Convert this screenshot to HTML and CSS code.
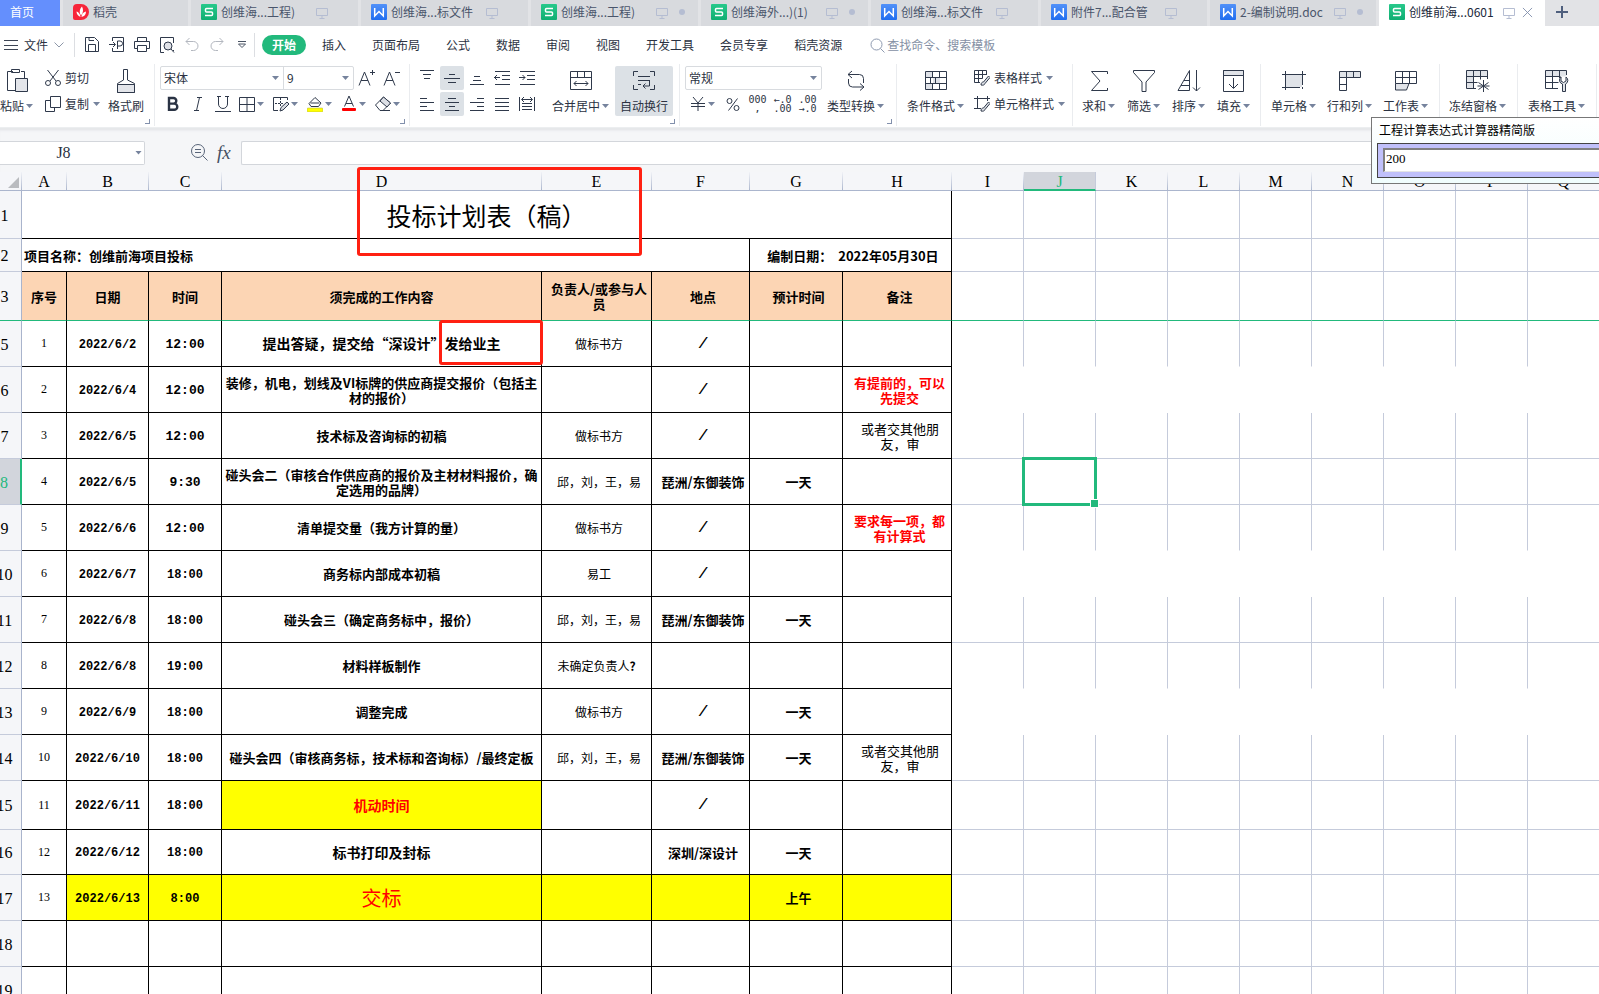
FILE: index.html
```html
<!DOCTYPE html>
<html lang="zh-CN">
<head>
<meta charset="utf-8">
<title>创维前海项目投标计划表</title>
<link rel="stylesheet" href="styles.css">
</head>
<body>
<svg class="symbols" aria-hidden="true">
  <defs>
    <linearGradient id="gGreen" x1="0" y1="0" x2="0" y2="1"><stop offset="0" stop-color="#27c98b"/><stop offset="1" stop-color="#0fae72"/></linearGradient>
    <linearGradient id="gBlue" x1="0" y1="0" x2="0" y2="1"><stop offset="0" stop-color="#5291f8"/><stop offset="1" stop-color="#1f6df0"/></linearGradient>
  </defs>
  <symbol id="sheet" viewBox="0 0 16 16"><rect width="16" height="16" rx="1" fill="url(#gGreen)"/><path d="M12 4.500H5.500a1 1 0 0 0-1 1V7a1 1 0 0 0 1 1h5a1 1 0 0 1 1 1v1.500a1 1 0 0 1-1 1H4" fill="none" stroke="#fff" stroke-width="1.500"/></symbol>
  <symbol id="word" viewBox="0 0 16 16"><rect width="16" height="16" rx="1" fill="url(#gBlue)"/><path d="M3.700 4v8L8 7.500l4.300 4.500V4" fill="none" stroke="#fff" stroke-width="1.500"/></symbol>
  <symbol id="monitor" viewBox="0 0 12 12"><path d="M.5 1.500h11v7H.5zM6 8.500v3M3.500 11.500h5" fill="none" stroke="#b5bdd2"/></symbol>
</svg>

<header>
  <nav class="tabs" aria-label="文档标签">
    <button class="tab home">首页</button>
    <button class="tab docer"><svg class="i16" viewBox="0 0 16 16"><path d="M4 0h4a8 8 0 0 1 0 16H2a2 2 0 0 1-2-2V4a4 4 0 0 1 4-4z" fill="#f7253a"/><path d="M7.500 13C5 12 3.500 10 3.500 7.500 5.500 8 7 9.500 7.500 13zM8 11.500C6 8.500 6.500 5 9 2.500c1.500 3 1.500 6-1 9zM8.500 13c.2-3 1.700-5 4.500-5.500 0 3-1.500 5-4.500 5.500z" fill="#fff"/></svg>稻壳</button>
    <button class="tab"><svg class="i16"><use href="#sheet"/></svg><span>创维海...工程)</span><svg class="mon"><use href="#monitor"/></svg></button>
    <button class="tab"><svg class="i16"><use href="#word"/></svg><span>创维海...标文件</span><svg class="mon"><use href="#monitor"/></svg></button>
    <button class="tab"><svg class="i16"><use href="#sheet"/></svg><span>创维海...工程)</span><svg class="mon"><use href="#monitor"/></svg><i class="dot"></i></button>
    <button class="tab"><svg class="i16"><use href="#sheet"/></svg><span>创维海外...)(1)</span><svg class="mon"><use href="#monitor"/></svg><i class="dot"></i></button>
    <button class="tab"><svg class="i16"><use href="#word"/></svg><span>创维海...标文件</span><svg class="mon"><use href="#monitor"/></svg></button>
    <button class="tab narrow"><svg class="i16"><use href="#word"/></svg><span>附件7...配合管</span><svg class="mon"><use href="#monitor"/></svg></button>
    <button class="tab narrow"><svg class="i16"><use href="#word"/></svg><span>2-编制说明.doc</span><svg class="mon"><use href="#monitor"/></svg><i class="dot"></i></button>
    <button class="tab narrow active"><svg class="i16"><use href="#sheet"/></svg><span>创维前海...0601</span><svg class="mon"><use href="#monitor"/></svg><svg class="close" viewBox="0 0 12 12"><path d="M1 1l10 10M11 1L1 11" stroke="#8390ad" fill="none"/></svg></button>
    <button class="newtab" aria-label="新建"><svg width="12" height="12" viewBox="0 0 12 12"><path d="M6 0v12M0 6h12" stroke="#4f5f7d" stroke-width="2"/></svg></button>
  </nav>

  <div class="menu">
    <button class="file"><svg width="14" height="12" viewBox="0 0 14 12"><path d="M0 1.500h14M0 6.500h14M0 10.500h14" stroke="#3c4454"/></svg>文件<svg class="chev" width="10" height="6" viewBox="0 0 10 6"><path d="M.5.5L5 5 9.500.5" fill="none" stroke="#8d97a8"/></svg></button>
    <i class="bar"></i>
    <button class="q" aria-label="保存"><svg class="i16" viewBox="0 0 16 16"><path d="M1.500.500h9l4 4v10h-13zM4.500 14V7.500h7V14M5 .500v3h5" class="ln"/></svg></button>
    <button class="q" aria-label="输出"><svg class="i16" viewBox="0 0 16 16"><path d="M3.500 4V.500h11v14h-11V11M0 7.500h6M4 5l2.500 2.500L4 10M8.500 12V4H11a2 2 0 0 1 0 5H8" class="ln"/></svg></button>
    <button class="q" aria-label="打印"><svg class="i16" viewBox="0 0 16 16"><path d="M3.500 4V.500h9V4M3.500 11.500h-3v-7h15v7h-3M3.500 8.500h9v6h-9z" class="ln"/></svg></button>
    <button class="q" aria-label="打印预览"><svg class="i16" viewBox="0 0 16 16"><path d="M5 15.500H1.500V.500h13V6M14.500 13v1" class="ln"/><circle cx="9" cy="9" r="4" fill="#e0e2e8" stroke="#2f394b"/><path d="M12 12l3 3.500" class="ln"/></svg></button>
    <button class="q" aria-label="撤销"><svg class="i16" viewBox="0 0 16 16"><path d="M5.500 1L2 4.500 5.500 8M2 4.500h7.500a4.500 4.500 0 0 1 0 9H7" fill="none" stroke="#b3b7bf"/></svg></button>
    <button class="q" aria-label="恢复"><svg class="i16" viewBox="0 0 16 16"><path d="M10.500 1L14 4.500 10.500 8M14 4.500H6.500a4.500 4.500 0 0 0 0 9H9" fill="none" stroke="#b3b7bf"/></svg></button>
    <button class="q" aria-label="更多"><svg width="8" height="8" viewBox="0 0 8 8"><path d="M0 .500h8M.500 3h7L4 6.500z" fill="none" stroke="#4a5464"/></svg></button>
    <i class="bar"></i>
    <button class="pill">开始</button>
    <div class="mtabs">
      <button>插入</button><button>页面布局</button><button>公式</button><button>数据</button><button>审阅</button><button>视图</button><button>开发工具</button><button>会员专享</button><button>稻壳资源</button>
    </div>
    <label class="find"><svg width="15" height="15" viewBox="0 0 15 15"><circle cx="6.500" cy="6.500" r="5.500" fill="none" stroke="#8e9ab0"/><path d="M10.500 10.500l4 4" stroke="#8e9ab0"/></svg><input type="text" placeholder="查找命令、搜索模板"></label>
  </div>

  <div class="ribbon">
    <section class="g g1">
      <button class="big"><svg width="22" height="24" viewBox="0 0 22 24"><path d="M7 2.500H1.500v19H9M15 2.500h3.500V9" class="ln"/><path d="M5.500.500h8v3h-8z" class="ln"/><path d="M9.500 9.500h12v13h-12z" fill="#e3e5ea" stroke="#2f394b"/></svg><span>粘贴<i class="caret"></i></span></button>
      <div class="rows">
        <button class="sm"><svg class="i16" viewBox="0 0 16 16"><path d="M2.500 0l8.500 11M13.500 0L5 11" class="ln"/><circle cx="3" cy="13" r="2.500" class="ln"/><circle cx="13" cy="13" r="2.500" class="ln"/></svg>剪切</button>
        <button class="sm"><svg class="i16" viewBox="0 0 16 16"><path d="M5.500.500h10v11h-10zM5.500 4.500h-5v11h9v-4" class="ln"/></svg>复制<i class="caret"></i></button>
      </div>
      <button class="big"><svg width="20" height="24" viewBox="0 0 20 24"><path d="M7.500 11V.500h4V11l7 3.500v9h-17v-9z" fill="#fff" stroke="#2f394b"/><path d="M1.500 15.500h17v8h-17z" fill="#e3e5ea" stroke="#2f394b"/></svg><span>格式刷</span></button>
      <i class="launch"></i>
    </section>

    <section class="g g2">
      <div class="rows">
        <div class="r">
          <div class="combo"><div class="dd fontname"><select aria-label="字体"><option>宋体</option></select></div><div class="dd fontsize"><select aria-label="字号"><option>9</option></select></div></div>
          <button class="ic" aria-label="增大字号"><svg width="18" height="16" viewBox="0 0 18 16"><path d="M1 15.500L6.500 2 12 15.500M3 10.500h7M14.500 0v5M12 2.500h5" class="ln"/></svg></button>
          <button class="ic" aria-label="减小字号"><svg width="18" height="16" viewBox="0 0 18 16"><path d="M1 15.500L6.500 2 12 15.500M3 10.500h7M12 2.500h5" class="ln"/></svg></button>
        </div>
        <div class="r">
          <button class="ic" aria-label="加粗"><svg class="i16" viewBox="0 0 16 16"><path d="M4 2h4.500a2.800 2.800 0 0 1 0 5.600H4zM4 7.600h5.200a3 3 0 0 1 0 6.200H4z" fill="none" stroke="#2a3344" stroke-width="2.400"/></svg></button>
          <button class="ic" aria-label="倾斜"><svg class="i16" viewBox="0 0 16 16"><path d="M7 1.500h5M4 14.500h5M9.500 1.500l-3 13" class="ln"/></svg></button>
          <button class="ic" aria-label="下划线"><svg class="i16" viewBox="0 0 16 16"><path d="M2 .500h4M10 .500h4M3.500.500V8a4.500 4.500 0 0 0 9 0V.500M0 15.500h16" class="ln"/></svg></button>
          <button class="sp" aria-label="边框"><svg class="i16" viewBox="0 0 16 16"><path d="M.500 1.500h15v14H.500zM8 1.500v14M.500 8.500h15" class="ln"/></svg><i class="caret"></i></button>
          <button class="sp" aria-label="绘制边框"><svg class="i16" viewBox="0 0 16 16"><path d="M14.500 4V1.500H.500v13H5" class="ln"/><path d="M2 7.500h9M7.500 2v8" class="ln" stroke-dasharray="2 1"/><path d="M7 15l1-3.500L14 6l2 2-6 6z" fill="#d9dce3" stroke="#2f394b"/></svg><i class="caret"></i></button>
          <button class="sp" aria-label="填充颜色"><svg class="i16" viewBox="0 0 16 16"><path d="M2 7.500L8 1.500l6 5.500-2.500 3.500H4z" fill="#fff" stroke="#2f394b"/><path d="M3.500 7h9" class="ln"/><rect y="12" width="16" height="4" rx="1" fill="#ff0" stroke="#a8a850" stroke-width=".5"/></svg><i class="caret"></i></button>
          <button class="sp" aria-label="字体颜色"><svg class="i16" viewBox="0 0 16 16"><path d="M3.500 10.500L8 0l4.500 10.500M5 7.500h6" class="ln"/><rect x="1" y="12" width="14" height="3" rx="1" fill="#f00"/></svg><i class="caret"></i></button>
          <button class="sp" aria-label="清除"><svg class="i16" viewBox="0 0 16 16"><path d="M.500 9l8-8 7 6-7.500 7.500H5z" fill="#fff" stroke="#2f394b"/><path d="M5 5l7 6 3.500-4-7-6z" fill="#dcdfe5" stroke="#2f394b"/><path d="M8 14.500h7" class="ln"/></svg><i class="caret"></i></button>
        </div>
      </div>
      <i class="launch"></i>
    </section>

    <section class="g g3">
      <div class="rows">
        <div class="r al">
          <button class="ic" aria-label="顶端对齐"><svg class="i16" viewBox="0 0 16 16"><path d="M1 .500h14M4 4.500h8M5 8.500h6" class="ln"/></svg></button>
          <button class="ic on" aria-label="垂直居中"><svg class="i16" viewBox="0 0 16 16"><path d="M5 4.500h6M0 8.500h16M4 12.500h8" class="ln"/></svg></button>
          <button class="ic" aria-label="底端对齐"><svg class="i16" viewBox="0 0 16 16"><path d="M5 6.500h6M4 10.500h8M1 14.500h14" class="ln"/></svg></button>
          <button class="ic" aria-label="减少缩进"><svg class="i16" viewBox="0 0 16 16"><path d="M1 1.500h15M8 5.500h8M8 9.500h8M1 14.500h15M0 7.500h6M3 5L.500 7.500 3 10" class="ln"/></svg></button>
          <button class="ic" aria-label="增加缩进"><svg class="i16" viewBox="0 0 16 16"><path d="M1 1.500h15M8 5.500h8M8 9.500h8M1 14.500h15M0 7.500h6M3.500 5L6 7.500 3.500 10" class="ln"/></svg></button>
        </div>
        <div class="r al">
          <button class="ic" aria-label="左对齐"><svg class="i16" viewBox="0 0 16 16"><path d="M1 2.500h7M1 6.500h14M1 10.500h7M1 14.500h14" class="ln"/></svg></button>
          <button class="ic on" aria-label="水平居中"><svg class="i16" viewBox="0 0 16 16"><path d="M4 2.500h8M1 6.500h14M5 10.500h6M1 14.500h14" class="ln"/></svg></button>
          <button class="ic" aria-label="右对齐"><svg class="i16" viewBox="0 0 16 16"><path d="M8 2.500h7M1 6.500h14M8 10.500h7M1 14.500h14" class="ln"/></svg></button>
          <button class="ic" aria-label="两端对齐"><svg class="i16" viewBox="0 0 16 16"><path d="M1 2.500h14M1 6.500h14M1 10.500h14M1 14.500h14" class="ln"/></svg></button>
          <button class="ic" aria-label="分散对齐"><svg class="i16" viewBox="0 0 16 16"><path d="M.500 1v14M15.500 1v14M3 7.500h10M3 10.500h10M3 13.500h10M3 3.500h10M5 1L2.500 3.500 5 6M11 1l2.500 2.500L11 6" class="ln"/></svg></button>
        </div>
      </div>
      <button class="big merge"><svg width="22" height="20" viewBox="0 0 22 20"><path d="M.500.500h21v18H.500zM.500 6.500h21M7.500.500v6M14.500.500v6M4 12.500h14M6.500 10L4 12.500 6.500 15M15.500 10l2.500 2.500-2.500 2.500" class="ln"/></svg><span>合并居中<i class="caret"></i></span></button>
      <button class="big on wrap"><svg width="22" height="20" viewBox="0 0 22 20"><path d="M5 .500H.500V5M17 .500h4.500V5M5 18.500H.500V14M17 18.500h4.500V14M5 5.500h12M5 9.500h12M5 13.500h3M16.500 9.500v5.500H10M12.500 12.500L10 15l2.500 2.500" class="ln"/></svg><span>自动换行</span></button>
      <i class="launch"></i>
    </section>

    <section class="g g4">
      <div class="rows">
        <div class="combo"><div class="dd numfmt"><select aria-label="数字格式"><option>常规</option></select></div></div>
        <div class="r">
          <button class="sp cur" aria-label="货币"><svg class="i16" viewBox="0 0 16 16"><path d="M3 1l5 6 5-6M1 7.500h14M1 10.500h14M8 7v8" class="ln"/></svg><i class="caret"></i></button>
          <button class="ic" aria-label="百分比"><svg class="i16" viewBox="0 0 16 16"><circle cx="4.500" cy="5" r="2.500" class="ln"/><circle cx="11.500" cy="12" r="2.500" class="ln"/><path d="M12.500 2.500l-9 12" class="ln"/></svg></button>
          <button class="ic num" aria-label="千位分隔"><span>000</span><span>,</span></button>
          <button class="ic num" aria-label="增加小数位"><span>←.0</span><span>.00</span></button>
          <button class="ic num" aria-label="减少小数位"><span>.00</span><span>→.0</span></button>
        </div>
      </div>
      <button class="big conv"><svg width="20" height="22" viewBox="0 0 20 22"><path d="M6 1L2 4.500 6 8M2 4.500h11.500a4 4 0 0 1 4 4V13M14 13.500l4 3.500-4 3.500M18 17H6.500a4 4 0 0 1-4-4V9" class="ln"/></svg><span>类型转换<i class="caret"></i></span></button>
      <i class="launch"></i>
    </section>

    <section class="g g5">
      <button class="big"><svg width="22" height="20" viewBox="0 0 22 20"><path d="M.500.500h21v18H.500z" fill="#fff"/><path d="M1 1h7v5H1zM8 7h7v5H8zM1 13h7v5H1z" fill="#dfe2e8"/><path d="M.500.500h21v18H.500zM.500 6.500h21M.500 12.500h21M7.500.500v6M14.500.500v6M10.500 6.500v6M5.500 6.500v6M7.500 12.500v6M14.500 12.500v6" class="ln"/></svg><span>条件格式<i class="caret"></i></span></button>
      <div class="rows">
        <button class="sm"><svg class="i16" viewBox="0 0 16 16"><path d="M6 12.500H.500v-12h12V5M.500 4.500h12M.500 8.500h8M4.500.500v12M8.500.500v8" class="ln"/><path d="M7 15c0-2 1-3 2.500-3L14.500 6l1.500 1.500-5 6c-.5 1.500-2 2-4 1.500z" fill="#dcdfe5" stroke="#2f394b"/></svg>表格样式<i class="caret"></i></button>
        <button class="sm"><svg class="i16" viewBox="0 0 16 16"><path d="M3.500 0v13M0 2.500h16M0 12.500h7M13.500 0v5" class="ln"/><path d="M7 15c0-2 1-3 2.500-3L14.500 6l1.500 1.500-5 6c-.5 1.500-2 2-4 1.500z" fill="#dcdfe5" stroke="#2f394b"/></svg>单元格样式<i class="caret"></i></button>
      </div>
    </section>

    <section class="g g6">
      <button class="big"><svg width="18" height="22" viewBox="0 0 18 22"><path d="M17.500 4V1.500H1.500L10 11l-8.500 9.500h16V18" class="ln"/></svg><span>求和<i class="caret"></i></span></button>
      <button class="big"><svg width="22" height="22" viewBox="0 0 22 22"><path d="M.500.500h21v2L13 12v9.500H9V12L.500 2.500z" class="ln"/></svg><span>筛选<i class="caret"></i></span></button>
      <button class="big"><svg width="24" height="22" viewBox="0 0 24 22"><path d="M1 20.500L12.500.500v20zM4 15.500h8M7 10.500h5M19.500 0v21M16 17.500l3.500 3.500 3.500-3.500" class="ln"/></svg><span>排序<i class="caret"></i></span></button>
      <button class="big"><svg width="22" height="22" viewBox="0 0 22 22"><path d="M.500.500h20v21H.500z" class="ln"/><path d="M.500.500h20v5H.500z" fill="#e0e3e8" stroke="#2f394b"/><path d="M10.500 8v10M6 14l4.500 4.500L15 14" class="ln"/></svg><span>填充<i class="caret"></i></span></button>
    </section>

    <section class="g g7">
      <button class="big"><svg width="24" height="20" viewBox="0 0 24 20"><path d="M3 3h17v13H3z" fill="#e0e3e8"/><path d="M0 3.500h24M0 16.500h18M3.500 0v19M20.500 0v14M20.500 16v2" class="ln"/></svg><span>单元格<i class="caret"></i></span></button>
      <button class="big"><svg width="22" height="20" viewBox="0 0 22 20"><path d="M.500.500h21v6H.500z" fill="#e0e3e8"/><path d="M.500.500h21v6h-14v13h-7zM.500 6.500h7v-6M14.500.500v6M.500 13.500h7" class="ln"/></svg><span>行和列<i class="caret"></i></span></button>
      <button class="big"><svg width="22" height="20" viewBox="0 0 22 20"><path d="M.500 12.500h13l-2 6.500H.500z" fill="#e0e3e8"/><path d="M.500.500h21v12H.500zM.500 6.500h21M7.500.500v12M14.500.500v12M.500 12.500v6.500h11l2.500-6.500" class="ln"/></svg><span>工作表<i class="caret"></i></span></button>
    </section>

    <section class="g g8">
      <button class="big"><svg width="24" height="22" viewBox="0 0 24 22"><path d="M.500.500h21v6h-14v12h-7z" fill="#e0e3e8"/><path d="M10 18.500H.500V.500h21V9M.500 6.500h21M.500 12.500h11M7.500.500v18M14.500.500v9M17.500 10v12M12.500 12.500l10 7M22.500 12.500l-10 7M11.500 16h12" class="ln"/></svg><span>冻结窗格<i class="caret"></i></span></button>
    </section>

    <section class="g g9">
      <button class="big"><svg width="24" height="22" viewBox="0 0 24 22"><path d="M.500.500h21v6h-21z" fill="#e0e3e8"/><path d="M13 18.500H.500V.500h21V5M.500 6.500h15M.500 12.500h13M7.500.500v18M14.500.500V8" class="ln"/><path d="M17.500 21.500v-7.500a4 4 0 0 1-1.500-7v4l2.500 1.500 2.500-1.500V7a4 4 0 0 1-.500 7v7.500z" fill="#e0e3e8" stroke="#2f394b"/></svg><span>表格工具<i class="caret"></i></span></button>
    </section>
  </div>

  <div class="fbar">
    <div class="dd namebox"><input type="text" value="J8" aria-label="名称框"></div>
    <svg width="17" height="17" viewBox="0 0 17 17"><circle cx="7" cy="7" r="6.500" fill="none" stroke="#596579"/><path d="M4 5.500h6M4 8.500h6M11.500 11.500l5 5" stroke="#596579"/></svg>
    <span class="fx">fx</span>
    <input class="formula" type="text" aria-label="编辑栏">
  </div>
</header>

<main class="view">
<table class="sheet">
  <colgroup><col class="rh"><col class="a"><col class="b"><col class="c"><col class="d"><col class="e"><col class="f"><col class="gg"><col class="h"><col class="n"><col class="n"><col class="n"><col class="n"><col class="n"><col class="n"><col class="n"><col class="n"><col class="n"></colgroup>
  <thead>
    <tr><th class="corner"><svg width="11" height="11" viewBox="0 0 11 11"><path d="M11 0v11H0z" fill="#b9bbbf"/></svg></th><th>A</th><th>B</th><th>C</th><th>D</th><th>E</th><th>F</th><th>G</th><th>H</th><th>I</th><th class="sel">J</th><th>K</th><th>L</th><th>M</th><th>N</th><th>O</th><th>P</th><th>Q</th></tr>
  </thead>
  <tbody>
    <tr class="h48"><th>1</th><td class="x title" colspan="8">投标计划表（稿）</td><td></td><td></td><td></td><td></td><td></td><td></td><td></td><td></td><td></td></tr>
    <tr class="h33"><th>2</th><td class="x bd left" colspan="6">项目名称：创维前海项目投标</td><td class="x bd p" colspan="2">编制日期：&nbsp; 2022年05月30日</td><td></td><td></td><td></td><td></td><td></td><td></td><td></td><td></td><td></td></tr>
    <tr class="h49 head"><th>3</th><td class="x">序号</td><td class="x">日期</td><td class="x">时间</td><td class="x">须完成的工作内容</td><td class="x p">负责人/或参与人员</td><td class="x p">地点</td><td class="x p">预计时间</td><td class="x p">备注</td><td></td><td></td><td></td><td></td><td></td><td></td><td></td><td></td><td></td></tr>
    <tr class="nobot"><th>5</th><td class="x no">1</td><td class="x dt">2022/6/2</td><td class="x tm">12:00</td><td class="x bd lg">提出答疑，提交给“深设计”发给业主</td><td class="x p">做标书方</td><td class="x p sl">/</td><td class="x"></td><td class="x"></td><td></td><td></td><td></td><td></td><td></td><td></td><td></td><td></td><td></td></tr>
    <tr class="blank"><th>6</th><td class="x no">2</td><td class="x dt">2022/6/4</td><td class="x tm">12:00</td><td class="x bd">装修，机电，划线及VI标牌的供应商提交报价（包括主材的报价）</td><td class="x"></td><td class="x p sl">/</td><td class="x"></td><td class="x bd red p">有提前的，可以先提交</td><td></td><td></td><td></td><td></td><td></td><td></td><td></td><td></td><td></td></tr>
    <tr><th>7</th><td class="x no">3</td><td class="x dt">2022/6/5</td><td class="x tm">12:00</td><td class="x bd">技术标及咨询标的初稿</td><td class="x p">做标书方</td><td class="x p sl">/</td><td class="x"></td><td class="x note">或者交其他朋友，审</td><td></td><td></td><td></td><td></td><td></td><td></td><td></td><td></td><td></td></tr>
    <tr><th class="sel">8</th><td class="x no">4</td><td class="x dt">2022/6/5</td><td class="x tm">9:30</td><td class="x bd">碰头会二（审核合作供应商的报价及主材材料报价，确定选用的品牌）</td><td class="x p">邱，刘，王，易</td><td class="x p bd">琵洲/东御装饰</td><td class="x p bd">一天</td><td class="x"></td><td></td><td class="cursor"></td><td></td><td></td><td></td><td></td><td></td><td></td><td></td></tr>
    <tr class="nobot"><th>9</th><td class="x no">5</td><td class="x dt">2022/6/6</td><td class="x tm">12:00</td><td class="x bd">清单提交量（我方计算的量）</td><td class="x p">做标书方</td><td class="x p sl">/</td><td class="x"></td><td class="x bd red p">要求每一项，都有计算式</td><td></td><td></td><td></td><td></td><td></td><td></td><td></td><td></td><td></td></tr>
    <tr class="blank"><th>10</th><td class="x no">6</td><td class="x dt">2022/6/7</td><td class="x dt">18:00</td><td class="x bd">商务标内部成本初稿</td><td class="x p">易工</td><td class="x p sl">/</td><td class="x"></td><td class="x"></td><td></td><td></td><td></td><td></td><td></td><td></td><td></td><td></td><td></td></tr>
    <tr><th>11</th><td class="x no">7</td><td class="x dt">2022/6/8</td><td class="x dt">18:00</td><td class="x bd">碰头会三（确定商务标中，报价）</td><td class="x p">邱，刘，王，易</td><td class="x p bd">琵洲/东御装饰</td><td class="x p bd">一天</td><td class="x"></td><td></td><td></td><td></td><td></td><td></td><td></td><td></td><td></td><td></td></tr>
    <tr class="nobot"><th>12</th><td class="x no">8</td><td class="x dt">2022/6/8</td><td class="x dt">19:00</td><td class="x bd">材料样板制作</td><td class="x">未确定负责人<b>?</b></td><td class="x"></td><td class="x"></td><td class="x"></td><td></td><td></td><td></td><td></td><td></td><td></td><td></td><td></td><td></td></tr>
    <tr class="blank"><th>13</th><td class="x no">9</td><td class="x dt">2022/6/9</td><td class="x dt">18:00</td><td class="x bd">调整完成</td><td class="x p">做标书方</td><td class="x p sl">/</td><td class="x p bd">一天</td><td class="x"></td><td></td><td></td><td></td><td></td><td></td><td></td><td></td><td></td><td></td></tr>
    <tr><th>14</th><td class="x no">10</td><td class="x dt">2022/6/10</td><td class="x dt">18:00</td><td class="x bd">碰头会四（审核商务标，技术标和咨询标）/最终定板</td><td class="x p">邱，刘，王，易</td><td class="x p bd">琵洲/东御装饰</td><td class="x p bd">一天</td><td class="x note">或者交其他朋友，审</td><td></td><td></td><td></td><td></td><td></td><td></td><td></td><td></td><td></td></tr>
    <tr class="h49"><th>15</th><td class="x no">11</td><td class="x dt">2022/6/11</td><td class="x dt">18:00</td><td class="x bd lg red yel">机动时间</td><td class="x"></td><td class="x p sl">/</td><td class="x"></td><td class="x"></td><td></td><td></td><td></td><td></td><td></td><td></td><td></td><td></td><td></td></tr>
    <tr class="h45"><th>16</th><td class="x no">12</td><td class="x dt">2022/6/12</td><td class="x dt">18:00</td><td class="x bd lg">标书打印及封标</td><td class="x"></td><td class="x p bd">深圳/深设计</td><td class="x p bd">一天</td><td class="x"></td><td></td><td></td><td></td><td></td><td></td><td></td><td></td><td></td><td></td></tr>
    <tr><th>17</th><td class="x no">13</td><td class="x dt yel">2022/6/13</td><td class="x dt yel">8:00</td><td class="x final red yel">交标</td><td class="x yel"></td><td class="x yel"></td><td class="x p bd yel">上午</td><td class="x yel"></td><td></td><td></td><td></td><td></td><td></td><td></td><td></td><td></td><td></td></tr>
    <tr><th>18</th><td class="x"></td><td class="x"></td><td class="x"></td><td class="x"></td><td class="x"></td><td class="x"></td><td class="x"></td><td class="x"></td><td></td><td></td><td></td><td></td><td></td><td></td><td></td><td></td><td></td></tr>
    <tr><th>19</th><td class="x"></td><td class="x"></td><td class="x"></td><td class="x"></td><td class="x"></td><td class="x"></td><td class="x"></td><td class="x"></td><td></td><td></td><td></td><td></td><td></td><td></td><td></td><td></td><td></td></tr>
  </tbody>
</table>
</main>

<div class="mark mark-title"></div>
<div class="mark mark-owner"></div>

<aside class="calc">
  <label for="expr">工程计算表达式计算器精简版</label>
  <div class="calc-body"><input id="expr" type="text" value="200"></div>
</aside>
</body>
</html>
```
FILE: styles.css
```css
* { box-sizing: border-box; }
body {
  margin: 0;
  height: 100vh;
  overflow: hidden;
  position: relative;
  display: flex;
  flex-direction: column;
  background: #fff;
  color: #2b3242;
  font: 12px/18px "Noto Sans CJK SC", sans-serif;
}
button, input, select { font: inherit; color: inherit; }
button { border: 0; padding: 0; margin: 0; background: none; white-space: nowrap; }
svg { display: block; flex: none; }
.symbols { position: absolute; width: 0; height: 0; }
.i16 { width: 16px; height: 16px; }
.ln { fill: none; stroke: #2f394b; }
header { flex: none; }

/* document tabs */
.tabs { display: flex; gap: 3px; height: 26px; background: #e2e3e6; }
.tab {
  flex: none;
  width: 167px;
  padding: 0 10px 2px;
  display: flex;
  align-items: center;
  background: #d8dade;
  color: #4a556b;
}
.tab span { width: 95px; margin-left: 4px; text-align: left; }
.tab .mon { width: 12px; height: 12px; margin-top: 2px; }
.tab.narrow { width: 166px; }
.tab.narrow span { width: 94px; }
.tab.home { width: 60px; background: #648ffd; color: #fff; }
.tab.docer { width: 125px; gap: 4px; }
.tab.active { background: #fff; color: #20283a; }
.dot { width: 6px; height: 6px; border-radius: 3px; background: #b5bdd2; margin-left: 11px; }
.close { width: 11px; height: 11px; margin-left: 7px; }
.newtab { width: 28px; display: flex; align-items: center; justify-content: center; padding-bottom: 3px; }

/* menu row */
.menu { display: flex; align-items: center; height: 38px; background: #fff; }
.file { display: flex; align-items: center; gap: 6px; width: 74px; padding-left: 4px; flex: none; }
.bar { width: 1px; height: 24px; background: #dcdee2; flex: none; }
.bar + .q { margin-left: 4px; }
.q { width: 25px; height: 24px; display: flex; align-items: center; justify-content: center; flex: none; }
.pill { margin-left: 7px; width: 44px; height: 20px; border-radius: 10px; background: #22b97c; color: #fff; font-weight: 700; flex: none; }
.mtabs { display: flex; gap: 26px; margin-left: 16px; }
.find { display: flex; align-items: center; gap: 2px; margin-left: 28px; }
.find input { width: 160px; border: 0; padding: 0; background: none; outline: 0; }
.find input::placeholder { color: #8590a4; opacity: 1; }

/* ribbon */
.ribbon { display: flex; height: 64px; background: #fff; border-bottom: 1px solid #eceef0; overflow: hidden; }
.g { position: relative; flex: none; display: flex; height: 62px; padding-top: 2px; border-right: 1px solid #eaecef; }
.g1 { width: 155px; }
.g2 { width: 255px; padding-left: 5px; }
.g3 { width: 270px; padding-left: 5px; }
.g4 { width: 217px; padding-left: 5px; }
.g5 { width: 176px; padding-left: 10px; gap: 10px; }
.g6 { width: 188px; padding-left: 9px; gap: 12px; }
.g7 { width: 179px; padding-left: 10px; gap: 11px; }
.g8 { width: 78px; padding-left: 9px; }
.g9 { width: 79px; padding-left: 10px; }
.g1 .rows { margin-left: 12px; width: 63px; }
.big { height: 50px; display: grid; grid-template-rows: 30px 20px; place-items: center; flex: none; align-self: start; }
.big span, .sm { display: flex; align-items: center; }
.big .caret { margin-left: 2px; }
.sm { gap: 4px; }
.rows { display: grid; grid-template-rows: 24px 24px; gap: 2px; align-content: start; justify-items: start; }
.r { display: flex; height: 24px; }
.al { gap: 1px; }
.ic { width: 25px; height: 24px; display: flex; align-items: center; justify-content: center; flex: none; }
.al .ic { width: 24px; }
.sp { width: 34px; height: 24px; padding-left: 4px; display: flex; align-items: center; gap: 2px; flex: none; }
.on { background: #dce1e6; border-radius: 2px; }
.caret { width: 7px; height: 4px; background: #76839d; clip-path: polygon(0 0, 100% 0, 50% 100%); flex: none; }
.sp.cur { width: 35px; padding-left: 5px; }
.merge { margin-left: 13px; }
.wrap { width: 58px; margin-left: 6px; }
.conv { margin-left: 5px; }
.num { flex-direction: column; font: 10px/9px "DejaVu Sans Mono", monospace; }
.launch { position: absolute; right: 4px; bottom: 2px; width: 5px; height: 5px; border-right: 1px solid #8290ac; border-bottom: 1px solid #8290ac; }
.combo { display: flex; height: 24px; border: 1px solid #d8dbdf; border-radius: 2px; background: #fff; }
.dd { position: relative; }
.dd::after { content: ""; position: absolute; right: 4px; top: 9px; width: 7px; height: 4px; background: #76839d; clip-path: polygon(0 0, 100% 0, 50% 100%); pointer-events: none; }
.dd select { appearance: none; border: 0; background: none; width: 100%; height: 22px; padding: 0 3px; outline: 0; }
.fontname { width: 122px; }
.fontsize { width: 70px; border-left: 1px solid #d8dbdf; }
.numfmt { width: 135px; }

/* formula bar */
.fbar { display: flex; align-items: center; height: 44px; padding-top: 4px; background: #f5f6f8; border-top: 1px solid #e6e8ea; box-shadow: inset 0 3px 3px -2px #dfe1e4; }
.namebox { width: 145px; height: 24px; margin-right: 46px; flex: none; }
.namebox::after { top: 10px; right: 3px; }
.namebox input { display: block; width: 145px; height: 24px; border: 1px solid #d3d6db; border-left: 0; border-radius: 0 2px 2px 0; padding: 1px 17px 0 0; text-align: center; font: 16px "Liberation Serif", serif; background: #fff; }
.fx { margin: 0 9px; width: 15px; font: italic 19px/22px "Liberation Serif", serif; color: #465164; }
.formula { flex: 1; min-width: 0; height: 24px; border: 1px solid #d3d6db; border-right: 0; border-radius: 2px 0 0 2px; background: #fff; }

/* sheet */
.view { flex: 1; min-height: 0; overflow: hidden; margin-left: -12px; }
.sheet { width: 100%; table-layout: fixed; border-collapse: separate; border-spacing: 0; color: #000; line-height: 15px; }
.rh { width: 34px; }
.a { width: 45px; }
.b { width: 82px; }
.c { width: 73px; }
.d { width: 320px; }
.e { width: 110px; }
.f { width: 98px; }
.gg { width: 93px; }
.h { width: 109px; }
.n { width: 72px; }
.sheet th { font: 16px/18px "Liberation Serif", serif; padding: 2px 0 0; background: #f5f6f9; border-right: 1px solid #a9b4cc; border-bottom: 1px solid #c5cbdb; }
.sheet thead th { height: 19px; padding: 2px 0 0; line-height: 16px; border-bottom: 1px solid #a9b4cc; border-image: linear-gradient(#f5f6f9, #a9b4cc) 1; }
.sheet thead th.sel { background: #d2d5dc; color: #22b97c; border-image: none; border-bottom: 2px solid #22b97c; border-right-color: #c5cbdb; line-height: 15px; }
.sheet tbody th.sel { background: #d2d5dc; color: #22b97c; border-right: 2px solid #22b97c; }
.corner svg { margin-left: 20px; }
.sheet td { height: 46px; padding: 0 2px; border-right: 1px solid #c5cbdb; border-bottom: 1px solid #c5cbdb; text-align: center; vertical-align: middle; }
.sheet .h48 td { height: 48px; }
.sheet .h33 td { height: 33px; }
.sheet .h49 td { height: 49px; }
.sheet .h45 td { height: 45px; }
.sheet .nobot td { border-bottom-color: #fff; }
.sheet .blank td { border-color: #fff; }
.sheet td.x { border-color: #000; }
.sheet .head td, .sheet .head th { border-bottom-color: #22b97c; }
.sheet td.p { padding: 0 1px 0 6px; }
.head .x { background: #fcd5b4; font-size: 13px; font-weight: 700; }
.sheet .title { font-size: 25px; line-height: 30px; }
.bd { font-size: 13px; font-weight: 700; }
.sheet .left { text-align: left; }
.lg { font-size: 14px; }
.no { font: 12px "Liberation Serif", serif; }
.sheet td.dt { font: bold 12px "Liberation Mono", monospace; padding-top: 2px; }
.sheet td.tm { font: bold 13px "Liberation Mono", monospace; padding-top: 2px; }
.sl { font: italic bold 14px "Liberation Mono", monospace; }
.sheet .note { font-size: 13px; padding: 0 8px 0 14px; }
.red { color: #f00; }
.yel { background: #ff0; }
.final { font-size: 20px; line-height: 24px; }

/* cell cursor with its fill handle */
.cursor { position: relative; }
.cursor::before { content: ""; position: absolute; inset: -2px; border: 3px solid #22b97c; }
.cursor::after { content: ""; position: absolute; right: -4px; bottom: -4px; width: 7px; height: 7px; background: #22b97c; border: 1px solid #fff; }

/* annotation frames */
.mark { position: absolute; border: 3px solid #ff2012; border-radius: 3px; }
.mark-title { left: 357px; top: 167px; width: 285px; height: 89px; }
.mark-owner { left: 439px; top: 320px; width: 104px; height: 45px; }

/* floating calculator */
.calc { position: absolute; right: 0; top: 117px; width: 228px; height: 67px; border: 1px solid #777; border-right: 0; background: linear-gradient(#fff, #f0fdfd); padding: 2px 0 0 5px; color: #000; }
.calc label { display: block; height: 23px; padding-left: 2px; line-height: 20px; }
.calc-body { height: 35px; border: 1px solid #444; border-right: 0; background: #c0c0fa; padding: 4px 0 5px 5px; }
.calc-body input { display: block; width: 100%; height: 24px; border: 2px solid #808080; border-bottom: 1px solid #e4e4e4; border-right: 0; background: #fff; padding: 0 0 4px 1px; font: 13px "Liberation Serif", serif; }
```
